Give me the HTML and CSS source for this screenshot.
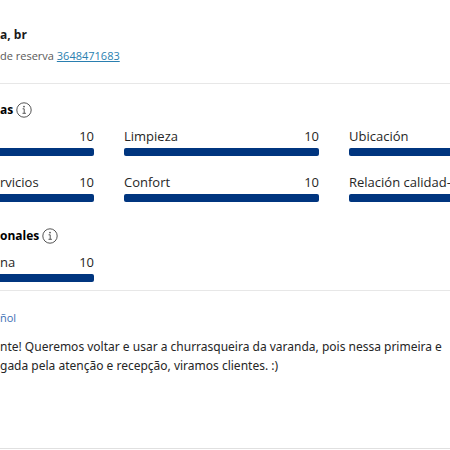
FILE: index.html
```html
<!DOCTYPE html>
<html lang="es">
<head>
    <meta charset="UTF-8">
    <meta name="viewport" content="width=device-width, initial-scale=1.0">
    <title>Comentarios</title>
    <link rel="stylesheet" href="styles.css">
</head>
<body>
    <article class="review">
        <header class="guest">
            <h2 class="guest-name">a, br</h2>
            <p class="booking">de reserva <a href="#">3648471683</a></p>
        </header>

        <section class="scores">
            <h3 class="scores-title">
                as
                <svg class="info" viewBox="0 0 16 16" aria-hidden="true">
                    <circle cx="8" cy="8" r="7.2"/>
                    <path d="M6.6 6.8H8.2V11.2M6.5 11.3H9.9"/>
                    <circle class="dot" cx="8" cy="4.6" r="0.9"/>
                </svg>
            </h3>
            <div class="score-grid">
                <div class="score first">
                    <div class="score-text"><span class="label"></span><span>10</span></div>
                    <div class="bar"></div>
                </div>
                <div class="score">
                    <div class="score-text"><span class="label">Limpieza</span><span>10</span></div>
                    <div class="bar"></div>
                </div>
                <div class="score last">
                    <div class="score-text"><span class="label">Ubicación</span></div>
                    <div class="bar"></div>
                </div>
                <div class="score first">
                    <div class="score-text"><span class="label">rvicios</span><span>10</span></div>
                    <div class="bar"></div>
                </div>
                <div class="score">
                    <div class="score-text"><span class="label">Confort</span><span>10</span></div>
                    <div class="bar"></div>
                </div>
                <div class="score last">
                    <div class="score-text"><span class="label">Relación calidad-</span></div>
                    <div class="bar"></div>
                </div>
            </div>

            <h3 class="scores-title">
                onales
                <svg class="info" viewBox="0 0 16 16" aria-hidden="true">
                    <circle cx="8" cy="8" r="7.2"/>
                    <path d="M6.6 6.8H8.2V11.2M6.5 11.3H9.9"/>
                    <circle class="dot" cx="8" cy="4.6" r="0.9"/>
                </svg>
            </h3>
            <div class="score-grid">
                <div class="score first">
                    <div class="score-text"><span class="label">na</span><span>10</span></div>
                    <div class="bar"></div>
                </div>
            </div>
        </section>

        <section class="comment">
            <a class="translate" href="#">ñol</a>
            <p class="comment-text">nte! Queremos voltar e usar a churrasqueira da varanda, pois nessa primeira e<br>gada pela atenção e recepção, viramos clientes. :)</p>
        </section>
    </article>
</body>
</html>
```

FILE: styles.css
```css
body {
    margin: 0;
    background-color: #fff;
    color: #262626;
    font-family: "Open Sans", "Noto Sans", sans-serif;
    font-size: 13px;
    line-height: 20px;
}

h2, h3, p {
    margin: 0;
}

.review {
    overflow: hidden;
    border-bottom: 1px solid #e0e0e0;
}

.guest {
    padding: 25px 0 17px;
    border-bottom: 1px solid #e7e7e7;
}

.guest-name {
    font-size: 12px;
    color: #1a1a1a;
}

.booking {
    margin-top: 1px;
    font-size: 11px;
    color: #595959;
}

.booking a {
    color: #2a7fb0;
}

.scores {
    padding: 16px 0 8px;
    border-bottom: 1px solid #e7e7e7;
}

.scores-title {
    display: flex;
    align-items: center;
    gap: 3px;
    font-size: 12px;
    color: #000;
}

.info {
    width: 16px;
    height: 16px;
    fill: none;
    stroke: #555;
    stroke-width: 1;
}

.info .dot {
    fill: #555;
    stroke: none;
}

.score-grid {
    display: grid;
    grid-template-columns: 94fr 195fr 101fr;
    gap: 16px 30px;
    margin-top: 6px;
}

.score-grid + .scores-title {
    margin-top: 24px;
}

.score {
    min-width: 0;
}

.score-text {
    display: flex;
    justify-content: space-between;
    white-space: nowrap;
}

.bar {
    height: 8px;
    margin-top: 2px;
    background-color: #00357f;
    border-radius: 2px;
}

.first .bar {
    border-radius: 0 2px 2px 0;
}

.last .bar {
    border-radius: 2px 0 0 2px;
}

.comment {
    padding: 16px 0 73px;
}

.translate {
    font-size: 11px;
    color: #3b6fb5;
    text-decoration: none;
}

.comment-text {
    margin-top: 9px;
    font-family: "Noto Sans", "Open Sans", sans-serif;
    font-size: 12px;
    line-height: 19px;
    white-space: nowrap;
}
```
